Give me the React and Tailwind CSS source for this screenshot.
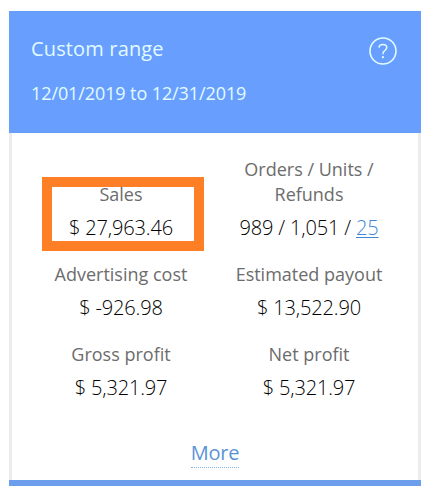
const STATS = [
  [
    { label: "Sales", value: "$ 27,963.46", highlight: true },
    { label: "Orders / Units / Refunds", value: "989 / 1,051 / ", link: "25" },
  ],
  [
    { label: "Advertising cost", value: "$ -926.98" },
    { label: "Estimated payout", value: "$ 13,522.90" },
  ],
  [
    { label: "Gross profit", value: "$ 5,321.97" },
    { label: "Net profit", value: "$ 5,321.97" },
  ],
];

function HelpIcon() {
  return (
    <svg viewBox="0 0 28 28" className="mt-0.5 mr-0.5 h-7 w-7" fill="none" stroke="currentColor" aria-hidden="true">
      <circle cx="14" cy="14" r="13" strokeWidth="1.6" />
      <path d="M10 10.6c.2-2 1.7-3.1 3.9-3.1 2.4 0 3.9 1.2 3.9 3.1 0 1.5-1 2.2-2.1 3.1-1.2.9-1.8 1.7-1.8 3.6" strokeWidth="1.5" />
      <circle cx="13.9" cy="20.2" r="1.1" fill="currentColor" stroke="none" />
    </svg>
  );
}

function Stat({ label, value, link, highlight }) {
  return (
    <div className="relative flex w-[188px] flex-col items-center justify-end text-center">
      <div className="max-w-[150px] text-[18px] leading-[25px] text-[#6c6c6c]">{label}</div>
      <div className="mt-[7px] text-[20px] leading-7 font-light tracking-[-0.15px] whitespace-nowrap text-black">
        {value}
        {link && (
          <a href="#" className="text-[#3f86d6] underline decoration-1 underline-offset-2">
            {link}
          </a>
        )}
      </div>
      {highlight && <div className="absolute -bottom-[9px] left-[15px] h-[74px] w-[162px] border-[10px] border-[#ff7f27]" />}
    </div>
  );
}

export default function App() {
  return (
    <div className="h-[496px] w-[433px] bg-white pt-[11px] pl-[9px] font-['Open_Sans',sans-serif]">
      <div className="flex h-[475px] w-[412px] flex-col border-b-[6px] border-[#6d9eeb]">
        <header className="flex h-[122px] shrink-0 justify-between bg-[#689fff] px-[22px] pt-6 text-[#e2fbff]">
          <div>
            <h1 className="text-[20px] leading-7 tracking-[0.15px]">Custom range</h1>
            <p className="mt-[18px] text-[18px] leading-6 tracking-[-0.1px]">12/01/2019 to 12/31/2019</p>
          </div>
          <HelpIcon />
        </header>
        <main className="flex grow flex-col items-center border-x-3 border-[#ececec] pt-6">
          <div className="flex flex-col gap-5">
            {STATS.map((row) => (
              <div key={row[0].label} className="flex">
                {row.map((stat) => (
                  <Stat key={stat.label} {...stat} />
                ))}
              </div>
            ))}
          </div>
          <a href="#" className="mt-auto mb-3 border-b border-dotted border-[#7fb0e0] text-[20px] leading-7 tracking-[-0.2px] text-[#5b93d6]">
            More
          </a>
        </main>
      </div>
    </div>
  );
}
